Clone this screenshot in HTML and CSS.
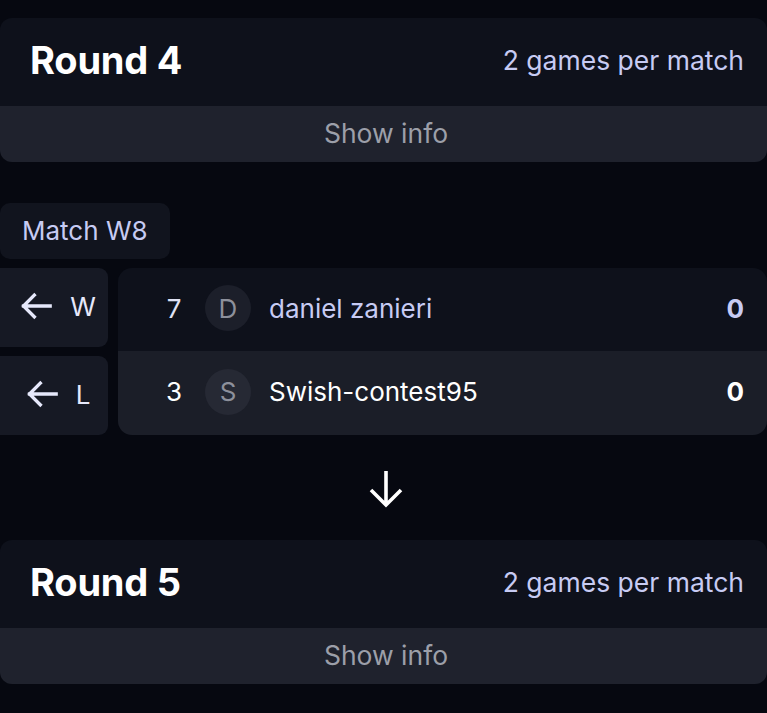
FILE: index.html
```html
<!DOCTYPE html>
<html lang="en">
<head>
<meta charset="utf-8">
<title>Bracket</title>
<link rel="stylesheet" href="styles.css">
</head>
<body>
<main class="page">
  <section class="round">
    <div class="round-head">
      <h2 class="round-title">Round 4</h2>
      <span class="round-meta">2 games per match</span>
    </div>
    <button class="show-info">Show info</button>
  </section>

  <div class="match-label">Match W8</div>

  <div class="match">
    <div class="nav">
      <button class="nav-btn">
        <svg class="nav-arrow" viewBox="0 0 24 24" width="40" height="40"><path d="M20.5 12H4.5M11 5.5l-6.5 6.5 6.5 6.5" fill="none" stroke="currentColor" stroke-width="2" stroke-linecap="square"/></svg>
        <span>W</span>
      </button>
      <button class="nav-btn">
        <svg class="nav-arrow" viewBox="0 0 24 24" width="40" height="40"><path d="M20.5 12H4.5M11 5.5l-6.5 6.5 6.5 6.5" fill="none" stroke="currentColor" stroke-width="2" stroke-linecap="square"/></svg>
        <span>L</span>
      </button>
    </div>
    <div class="match-card">
      <div class="player player-top">
        <span class="seed">7</span>
        <span class="avatar">D</span>
        <span class="name">daniel zanieri</span>
        <span class="score">0</span>
      </div>
      <div class="player player-bottom">
        <span class="seed">3</span>
        <span class="avatar">S</span>
        <span class="name">Swish-contest95</span>
        <span class="score">0</span>
      </div>
    </div>
  </div>

  <div class="down">
    <svg viewBox="0 0 40 40" width="40" height="40"><path d="M20 3V37M5 22l15 15 15-15" fill="none" stroke="currentColor" stroke-width="3.6"/></svg>
  </div>

  <section class="round">
    <div class="round-head">
      <h2 class="round-title">Round 5</h2>
      <span class="round-meta">2 games per match</span>
    </div>
    <button class="show-info">Show info</button>
  </section>
</main>
</body>
</html>
```

FILE: styles.css
```css
* { box-sizing: border-box; }

html, body {
  margin: 0;
  background: #060810;
  font-family: Inter, "Noto Sans", sans-serif;
  color: #ffffff;
  height: 100%;
  overflow: hidden;
}

.page {
  padding-top: 18px;
  display: flex;
  flex-direction: column;
}

.round {
  width: 767px;
  border-radius: 12px;
  overflow: hidden;
  display: flex;
  flex-direction: column;
}

.round-head {
  height: 88px;
  background: #0e111b;
  display: flex;
  align-items: center;
  justify-content: space-between;
  padding: 0 23px 4px 30px;
}

.round-title {
  margin: 0;
  font-size: 38px;
  font-weight: 700;
  letter-spacing: -0.2px;
  color: #ffffff;
}

.round-meta {
  font-size: 26.5px;
  color: #c7cbf3;
}

.show-info {
  height: 56px;
  border: 0;
  margin: 0;
  background: #1f222d;
  color: #9c9fa9;
  font-family: inherit;
  font-size: 26.5px;
  padding: 0 0 3px 5px;
}

.match-label {
  margin-top: 41px;
  align-self: flex-start;
  height: 56px;
  width: 170px;
  padding: 0 0 2px 22px;
  display: flex;
  align-items: center;
  background: #11141e;
  border-radius: 10px;
  font-size: 26px;
  color: #c7cbf3;
}

.match {
  margin-top: 9px;
  display: flex;
  gap: 10px;
}

.nav {
  width: 108px;
  display: flex;
  flex-direction: column;
  gap: 9px;
}

.nav-btn {
  height: 79px;
  border: 0;
  margin: 0;
  border-radius: 0 9px 9px 0;
  background: #161924;
  color: #e6e8fb;
  font-family: inherit;
  font-size: 26px;
  display: flex;
  align-items: center;
  justify-content: center;
  gap: 14px;
  padding: 0 0 3px 4px;
}

.nav-arrow { flex: none; }

.match-card {
  flex: 1;
  border-radius: 14px;
  overflow: hidden;
  display: flex;
  flex-direction: column;
}

.player {
  display: flex;
  align-items: center;
  padding: 0 23px 3px 46px;
  font-size: 26px;
}

.player-top { height: 83px; background: #0e111b; color: #c7cbf3; }
.player-bottom { height: 84px; background: #1b1e28; color: #ffffff; }

.seed {
  width: 20px;
  text-align: center;
  color: #dfe1f3;
}
.player-bottom .seed { color: #ffffff; }

.avatar {
  margin-left: 21px;
  width: 46px;
  height: 46px;
  border-radius: 50%;
  background: #1c1f2a;
  color: #8d909b;
  display: flex;
  align-items: center;
  justify-content: center;
  font-size: 26px;
}
.player-bottom .avatar { background: #262934; }

.name {
  margin-left: 18px;
  flex: 1;
}

.score {
  font-weight: 700;
}

.down {
  height: 105px;
  display: flex;
  align-items: center;
  justify-content: center;
  color: #ffffff;
  padding-left: 4px;
}
```
